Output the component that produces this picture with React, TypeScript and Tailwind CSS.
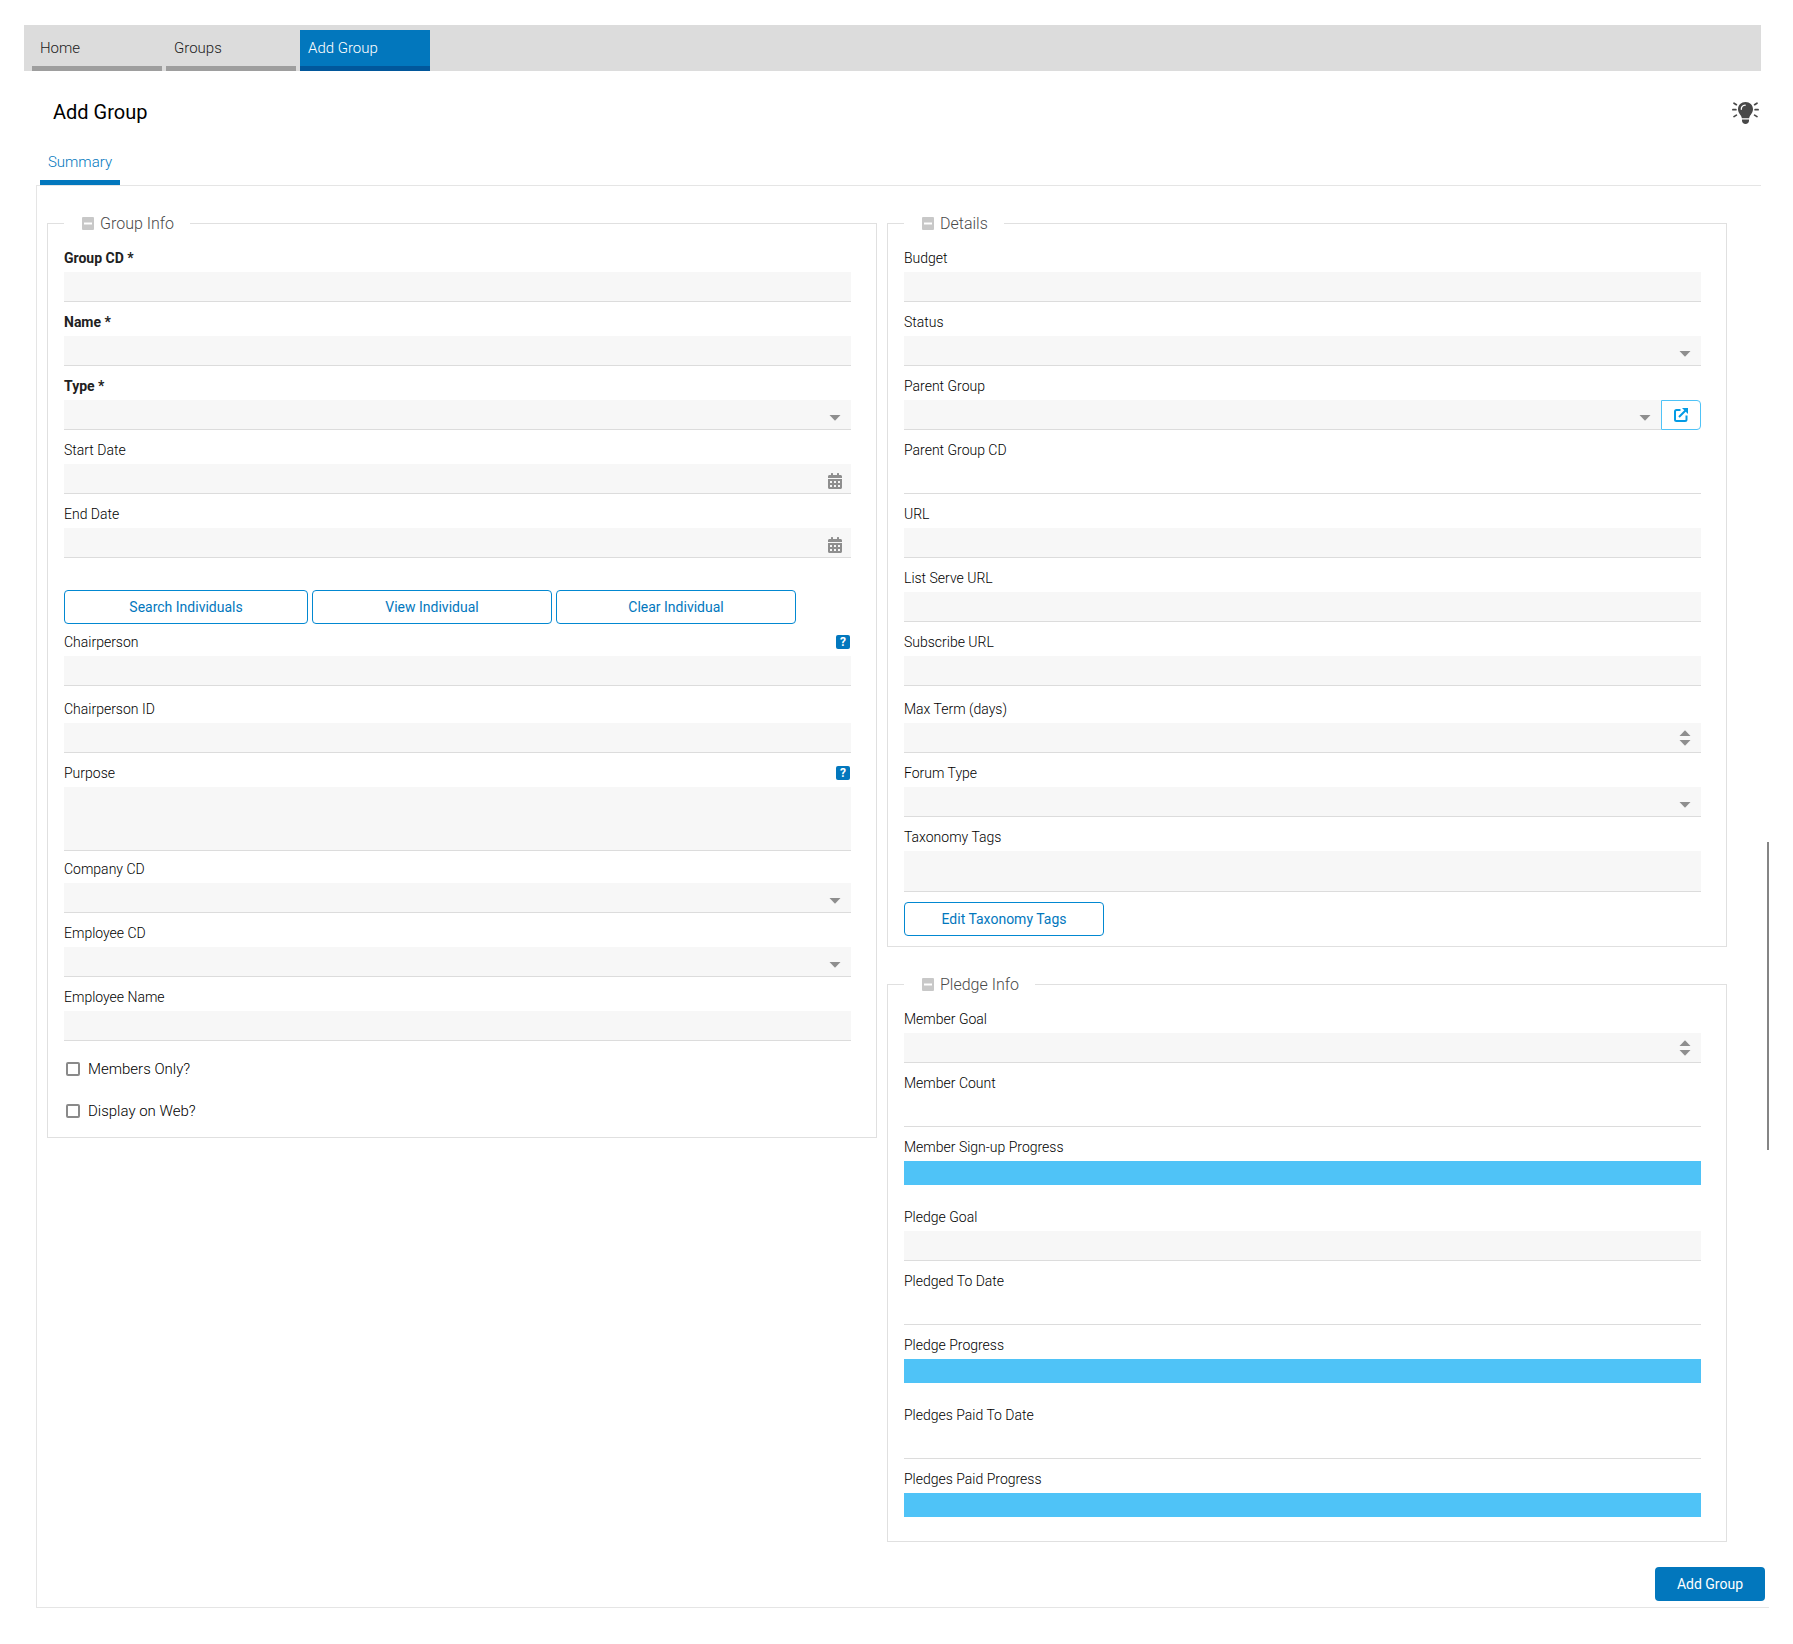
import type { ReactNode } from 'react';
import { FaCalendarAlt } from 'react-icons/fa';

const inputBase = 'block w-full h-[30px] bg-[#f7f7f7] border-b border-[#dcdcdc] rounded-none outline-none px-2 text-sm font-light';
const outlineButton = 'h-[34px] border border-[#0288d1] rounded bg-white text-[#0277bd] text-sm';

function toId(label: string) {
    return label.toLowerCase().replace(/[^a-z]+/g, '-');
}

function Caret({ up = false }: { up?: boolean }) {
    return (
        <svg width="12" height="6" viewBox="0 0 12 6" fill="#8e8e8e" aria-hidden="true">
            <path d={up ? 'M.5 6 6 .3 11.500 6z' : 'M.5 0h11L6 5.700z'} />
        </svg>
    );
}

function Bulb() {
    return (
        <svg width="27" height="22" viewBox="0 0 27 22" aria-hidden="true">
            <path d="M13.5 0C9.3 0 6 3.100 6 7.200c0 2.300 1.100 4 2.200 5.500.9 1.200 1.500 2.200 1.600 3.500h7.400c.1-1.300.7-2.300 1.600-3.500 1.100-1.500 2.200-3.200 2.200-5.500C21 3.100 17.700 0 13.500 0z" fill="#484848" />
            <path d="M10 17.600h7v1.200c0 1.800-1.500 3.200-3.500 3.200S10 20.600 10 18.800z" fill="#484848" />
            <path d="M9.300 7.300c0-2.300 1.600-3.900 3.900-4.100" fill="none" stroke="#fff" strokeWidth="1.300" strokeLinecap="round" />
            <path d="M.9 7.700h3M23.100 7.700h3M2 1.200l2.400 1.500M25 1.200l-2.400 1.500M2 14.600l2.400-1.500M25 14.600l-2.400-1.500" fill="none" stroke="#484848" strokeWidth="1.700" strokeLinecap="round" />
        </svg>
    );
}

function Field({ label, required, help, children }: { label: string; required?: boolean; help?: boolean; children: ReactNode }) {
    return (
        <div>
            <div className="flex h-5 items-center justify-between mb-1">
                <label htmlFor={toId(label)} className={required ? 'text-sm leading-5 font-bold' : 'text-sm leading-5 font-light text-black'}>
                    {label}{required && ' *'}
                </label>
                {help && (
                    <button type="button" aria-label={`${label} help`} className="w-3.5 h-3.5 mr-px rounded-xs bg-[#0277bd] text-white text-xs leading-[14px] font-bold">
                        ?
                    </button>
                )}
            </div>
            {children}
        </div>
    );
}

function TextField({ label, required, help }: { label: string; required?: boolean; help?: boolean }) {
    return (
        <Field label={label} required={required} help={help}>
            <input id={toId(label)} type="text" className={inputBase} />
        </Field>
    );
}

function ReadOnlyField({ label }: { label: string }) {
    return (
        <Field label={label}>
            <input id={toId(label)} type="text" readOnly className="block w-full h-[30px] border-b border-[#dcdcdc] outline-none" />
        </Field>
    );
}

function Select({ id }: { id: string }) {
    return (
        <div className="relative flex-1">
            <select id={id} className={`${inputBase} appearance-none`} />
            <span className="absolute right-0 top-0 w-8 h-full pt-1.5 flex items-center justify-center pointer-events-none">
                <Caret />
            </span>
        </div>
    );
}

function SelectField({ label, required }: { label: string; required?: boolean }) {
    return (
        <Field label={label} required={required}>
            <Select id={toId(label)} />
        </Field>
    );
}

function DateField({ label }: { label: string }) {
    return (
        <Field label={label}>
            <div className="relative">
                <input id={toId(label)} type="text" className={inputBase} />
                <span className="absolute right-0 top-0 w-8 h-full pt-1 flex items-center justify-center pointer-events-none">
                    <FaCalendarAlt className="w-3.5 h-4 text-[#8e8e8e]" />
                </span>
            </div>
        </Field>
    );
}

function NumberField({ label }: { label: string }) {
    return (
        <Field label={label}>
            <div className="relative">
                <input id={toId(label)} type="text" inputMode="numeric" className={inputBase} />
                <span className="absolute right-0 top-0 w-8 h-full flex flex-col gap-1 items-center justify-center pointer-events-none">
                    <Caret up />
                    <Caret />
                </span>
            </div>
        </Field>
    );
}

function ProgressField({ label }: { label: string }) {
    return (
        <Field label={label}>
            <div id={toId(label)} role="progressbar" aria-label={label} className="h-6 mb-3 bg-[#4fc3f7]" />
        </Field>
    );
}

function CheckField({ label }: { label: string }) {
    return (
        <label className="flex items-center gap-2 pl-0.5 text-[15px] leading-6 font-light text-black">
            <input type="checkbox" className="appearance-none w-3.5 h-3.5 border-2 border-[#8a8a8a] rounded-xs bg-white checked:bg-[#0277bd]" />
            {label}
        </label>
    );
}

function Section({ title, children }: { title: string; children: ReactNode }) {
    return (
        <fieldset className="min-w-0 border border-[#e0e0e0] pl-4 pr-[25px] pb-2.5">
            <legend className="flex items-center gap-1.5 pt-0.5 pl-[18px] pr-4 text-base leading-6 font-light text-[#4a4a4a]">
                <button type="button" aria-label={`Collapse ${title}`} className="pb-0.5">
                    <svg className="block" width="12" height="13" viewBox="0 0 12 13">
                        <rect width="12" height="13" rx="1" fill="#c8c8c8" />
                        <path d="M2 6.500h8" stroke="#fff" strokeWidth="2" />
                    </svg>
                </button>
                {title}
            </legend>
            <div className="flex flex-col gap-2.5 pt-3">{children}</div>
        </fieldset>
    );
}

export default function App() {
    return (
        <div className="relative min-h-screen bg-white pt-[25px] pl-6 pr-6 text-[#212121] font-[Roboto,'Liberation_Sans',sans-serif]">
            {/* Breadcrumb tabs */}
            <nav className="flex gap-1 h-[46px] pt-[5px] pl-2 mr-2 bg-[#dcdcdc] text-[15px] font-light">
                <a href="#home" className="flex items-center w-[130px] pl-2 border-b-5 border-[#9e9e9e]">Home</a>
                <a href="#groups" className="flex items-center w-[130px] pl-2 border-b-5 border-[#9e9e9e]">Groups</a>
                <a href="#add-group" className="flex items-center w-[130px] pl-2 border-b-5 border-[#01579b] bg-[#0277bd] text-white">Add Group</a>
            </nav>

            <header className="flex items-center justify-between h-[78px] pt-1 pl-[29px] pr-2.5">
                <h1 className="text-xl leading-[26px] text-black">Add Group</h1>
                <button type="button" aria-label="Tips" className="pt-0.5">
                    <Bulb />
                </button>
            </header>

            <div role="tablist" className="flex ml-3 mr-2 pl-1 border-b border-[#e5e5e5]">
                <button type="button" role="tab" aria-selected="true" className="w-20 pb-[5px] border-b-5 border-[#0277bd] text-[15px] leading-[26px] font-light text-[#0277bd]">
                    Summary
                </button>
            </div>

            {/* Form */}
            <form className="ml-3 border-l border-b border-[#e5e5e5] pt-6 pb-1.5">
                <div className="grid grid-cols-[83fr_84fr] items-start gap-2.5 pl-2.5 pr-[42px]">
                    <Section title="Group Info">
                        <TextField label="Group CD" required />
                        <TextField label="Name" required />
                        <SelectField label="Type" required />
                        <DateField label="Start Date" />
                        <DateField label="End Date" />
                        <div className="flex gap-1 pt-[22px]">
                            <button type="button" className={`${outlineButton} w-[244px]`}>Search Individuals</button>
                            <button type="button" className={`${outlineButton} w-60`}>View Individual</button>
                            <button type="button" className={`${outlineButton} w-60`}>Clear Individual</button>
                        </div>
                        <div className="-mt-0.5 mb-[3px]">
                            <TextField label="Chairperson" help />
                        </div>
                        <TextField label="Chairperson ID" />
                        <Field label="Purpose" help>
                            <textarea id="purpose" className="block w-full h-16 resize-none bg-[#f7f7f7] border-b border-[#dcdcdc] outline-none px-2 text-sm font-light" />
                        </Field>
                        <div className="-mt-0.5">
                            <SelectField label="Company CD" />
                        </div>
                        <SelectField label="Employee CD" />
                        <TextField label="Employee Name" />
                        <div className="flex flex-col gap-[18px] pt-1.5 pb-1">
                            <CheckField label="Members Only?" />
                            <CheckField label="Display on Web?" />
                        </div>
                    </Section>

                    <div className="flex flex-col gap-6 min-w-0">
                        <Section title="Details">
                            <TextField label="Budget" />
                            <SelectField label="Status" />
                            <Field label="Parent Group">
                                <div className="flex">
                                    <Select id="parent-group" />
                                    <button type="button" aria-label="Open parent group" className="flex items-center justify-center w-10 h-[30px] border border-[#4fc3f7] rounded-r bg-white">
                                        <svg width="14" height="14" viewBox="0 0 14 14" fill="none" stroke="#039be5" strokeWidth="2">
                                            <path d="M6.500 2H2.500Q1 2 1 3.500v8Q1 13 2.500 13h8.500Q12.500 13 12.500 11.500V7.500M5 9l7-7" />
                                            <path d="M8 0h6v6z" fill="#039be5" stroke="none" />
                                        </svg>
                                    </button>
                                </div>
                            </Field>
                            <ReadOnlyField label="Parent Group CD" />
                            <TextField label="URL" />
                            <TextField label="List Serve URL" />
                            <div className="mb-[3px]">
                                <TextField label="Subscribe URL" />
                            </div>
                            <NumberField label="Max Term (days)" />
                            <SelectField label="Forum Type" />
                            <Field label="Taxonomy Tags">
                                <textarea id="taxonomy-tags" className="block w-full h-[41px] resize-none bg-[#f7f7f7] border-b border-[#dcdcdc] outline-none px-2 text-sm font-light" />
                            </Field>
                            <button type="button" className={`${outlineButton} w-[200px]`}>Edit Taxonomy Tags</button>
                        </Section>

                        <Section title="Pledge Info">
                            <NumberField label="Member Goal" />
                            <ReadOnlyField label="Member Count" />
                            <ProgressField label="Member Sign-up Progress" />
                            <TextField label="Pledge Goal" />
                            <ReadOnlyField label="Pledged To Date" />
                            <ProgressField label="Pledge Progress" />
                            <ReadOnlyField label="Pledges Paid To Date" />
                            <div className="pb-0.5">
                                <ProgressField label="Pledges Paid Progress" />
                            </div>
                        </Section>
                    </div>
                </div>

                <div className="flex justify-end pt-[25px] pr-1">
                    <button type="submit" className="w-[110px] h-[34px] rounded bg-[#0277bd] text-white text-sm">Add Group</button>
                </div>
            </form>

            {/* Scroll thumb */}
            <div className="absolute right-6 top-[842px] w-0.5 h-[308px] bg-[#858585]" />
        </div>
    );
}
